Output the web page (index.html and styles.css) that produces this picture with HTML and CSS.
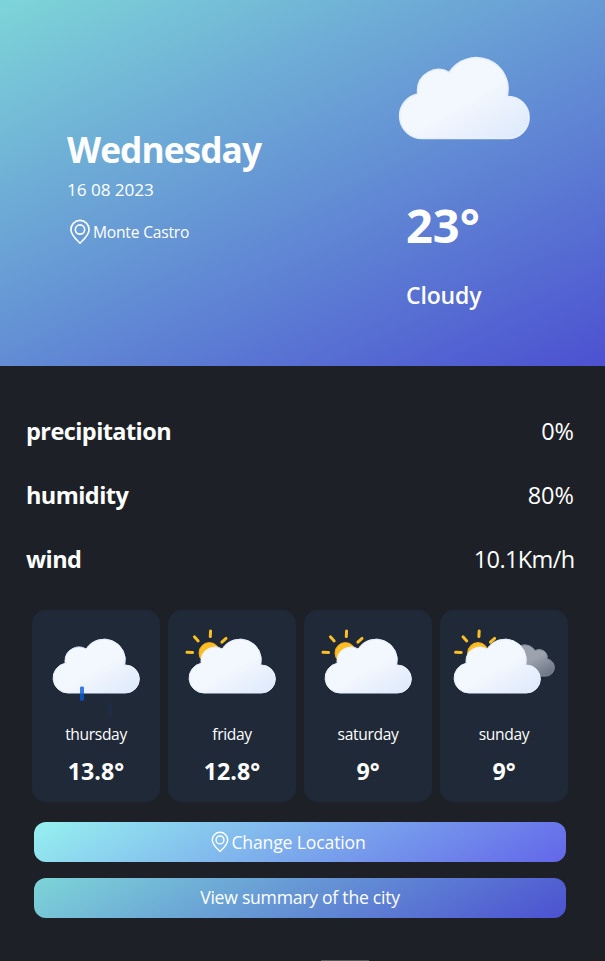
FILE: index.html
```html
<!DOCTYPE html>
<html lang="en">
<head>
<meta charset="utf-8">
<title>Weather</title>
<link rel="stylesheet" href="styles.css">
</head>
<body>
<svg class="defs" width="0" height="0" aria-hidden="true">
  <defs>
    <linearGradient id="white" gradientUnits="userSpaceOnUse" x1="22.56" y1="21.96" x2="39.2" y2="50.8">
      <stop offset="0" stop-color="#f3f7fe"/><stop offset=".45" stop-color="#f3f7fe"/><stop offset="1" stop-color="#deeafb"/>
    </linearGradient>
    <linearGradient id="gray" gradientUnits="userSpaceOnUse" x1="40.8" y1="23" x2="50.8" y2="40.5">
      <stop offset="0" stop-color="#9ca3af"/><stop offset=".45" stop-color="#9ca3af"/><stop offset="1" stop-color="#6b7280"/>
    </linearGradient>
    <symbol id="cloud" viewBox="0 0 64 64">
      <path d="M46.7 31.5h-.32a10.6 10.49 0 00-19.31-8 7 7 0 00-10.57 6 7.21 7.21 0 00.1 1.14A7.5 7.5 0 0018 45.5h28.7a7 7 0 000-14z" fill="url(#white)" stroke="#e6effc" stroke-width=".5"/>
    </symbol>
    <symbol id="sun" viewBox="0 0 64 64">
      <circle cx="20.7" cy="25.5" r="5.2" fill="#fbbf24" stroke="#f8af18" stroke-width=".5"/>
      <path d="M20.7 17.3v-2.8M12.3 25.7H9.5M14.76 19.76l-1.98-1.98M26.64 19.76l1.98-1.98" transform="rotate(3 20.7 25.7)" stroke="#fbbf24" stroke-width="1.5" stroke-linecap="round"/>
    </symbol>
    <symbol id="pin" viewBox="0 0 24 24">
      <path d="M12 22.3C9.2 19.4 3.6 15 3.6 9.7a8.4 8.4 0 0116.8 0c0 5.3-5.6 9.7-8.4 12.6z" fill="none" stroke="currentColor" stroke-width="1.5" stroke-linejoin="round"/>
      <circle cx="12" cy="9.7" r="4.3" fill="none" stroke="currentColor" stroke-width="1.5"/>
    </symbol>
  </defs>
</svg>
<main class="app">
  <header class="hero">
    <section class="place">
      <h1 class="day">Wednesday</h1>
      <p class="date">16 08 2023</p>
      <p class="city"><svg class="pin"><use href="#pin"/></svg><span class="city-name">Monte Castro</span></p>
    </section>
    <section class="now">
      <svg class="now-icon"><use href="#cloud"/></svg>
      <p class="now-temp">23°</p>
      <p class="now-text">Cloudy</p>
    </section>
  </header>
  <dl class="stats">
    <div class="stat"><dt>precipitation</dt><dd>0%</dd></div>
    <div class="stat"><dt>humidity</dt><dd>80%</dd></div>
    <div class="stat"><dt>wind</dt><dd class="speed">10.1Km/h</dd></div>
  </dl>
  <section class="week">
    <article class="card">
      <svg class="icon" viewBox="0 0 64 64"><use href="#cloud"/>
        <rect x="24" y="42.2" width="2" height="7.2" rx=".7" fill="#0a5ad4" opacity=".8"/>
        <rect x="38" y="50.5" width="2" height="7" rx=".7" fill="#0a5ad4" opacity=".08"/></svg>
      <p class="name">thursday</p><p class="temp">13.8°</p>
    </article>
    <article class="card">
      <svg class="icon" viewBox="0 0 64 64"><use href="#sun"/><use href="#cloud"/></svg>
      <p class="name">friday</p><p class="temp">12.8°</p>
    </article>
    <article class="card">
      <svg class="icon" viewBox="0 0 64 64"><use href="#sun"/><use href="#cloud"/></svg>
      <p class="name">saturday</p><p class="temp">9°</p>
    </article>
    <article class="card">
      <svg class="icon" viewBox="0 0 64 64"><g transform="translate(-1.7 0)"><use href="#sun"/>
        <path transform="translate(-.3 -.4)" d="M34.23 33.45a4.05 4.05 0 004.05 4h16.51a4.34 4.34 0 00.81-8.61 3.52 3.52 0 00.06-.66 4.06 4.06 0 00-6.13-3.48 6.08 6.08 0 00-11.25 3.19 6.34 6.34 0 00.18 1.46h-.18a4.05 4.05 0 00-4.05 4.1z" fill="url(#gray)" stroke="#848b98" stroke-width=".5"/></g>
        <g transform="translate(-3.5 0)"><use href="#cloud"/></g></svg>
      <p class="name">sunday</p><p class="temp">9°</p>
    </article>
  </section>
  <div class="actions">
    <button class="btn btn-light"><svg class="btn-pin"><use href="#pin"/></svg><span>Change Location</span></button>
    <button class="btn btn-summary"><span>View summary of the city</span></button>
  </div>
  <div class="track"><div class="thumb"></div></div>
</main>
</body>
</html>
```
FILE: styles.css
```css
* { box-sizing: border-box; margin: 0; padding: 0; }
body { background: #1d2027; color: #fff; font-family: "Open Sans", "Noto Sans", sans-serif; overflow: hidden; }
.defs { position: absolute; }
.app { width: 605px; height: 961px; display: flex; flex-direction: column; background: #1d2127; }
.hero { height: 366px; flex: none; display: flex; background: linear-gradient(154deg, #7dd5d8, #4c51d1); }
.place { width: 368px; padding: 129px 0 0 67px; }
.day { font-size: 35.3px; line-height: 40px; font-weight: 700; letter-spacing: -0.95px; }
.date { margin-top: 8px; font-size: 17.2px; line-height: 25px; letter-spacing: -0.08px; }
.city { margin-top: 17px; display: flex; align-items: center; height: 26px; }
.pin { width: 26px; height: 26px; }
.city-name { font-size: 15.6px; line-height: 24px; letter-spacing: -0.2px; margin-top: -1px; }
.now { width: 192px; padding-top: 2px; }
.now-icon { display: block; width: 192px; height: 192px; }
.now-temp { margin: -1px 0 0 38px; font-size: 47px; line-height: 64px; font-weight: 700; }
.now-text { margin: 22px 0 0 38px; font-size: 23px; line-height: 32px; font-weight: 600; letter-spacing: -0.15px; }
.stats { padding: 33px 31px 0 26px; font-size: 23.5px; }
.stat { height: 64px; display: flex; justify-content: space-between; align-items: center; line-height: 32px; }
.stat dt { font-weight: 700; letter-spacing: -0.57px; }
.speed { letter-spacing: -0.6px; margin-right: -0.6px; }
.week { display: flex; gap: 8px; padding: 19px 0 0 32px; }
.card { width: 128px; height: 192px; border-radius: 14px; background: #202938; text-align: center; }
.icon { display: block; width: 128px; height: 128px; margin-top: -8px; }
.name { font-size: 15.6px; line-height: 24px; margin-top: -8px; letter-spacing: -0.35px; }
.temp { font-size: 23.2px; line-height: 32px; font-weight: 700; margin-top: 9px; }
.actions { display: flex; flex-direction: column; gap: 16px; padding: 20px 39px 0 34px; }
.btn { height: 40px; border: 0; border-radius: 12px; display: flex; justify-content: center; align-items: center; color: #fff; font: 17.6px/28px "Open Sans", sans-serif; letter-spacing: -0.25px; background: linear-gradient(150deg, #7dd5d8, #4c51d1); }
.btn-light { padding-right: 25px; letter-spacing: -0.15px; background: linear-gradient(150deg, #96f1f0, #6366e9); }
.btn-summary { padding-bottom: 2px; }
.btn-pin { width: 22px; height: 22px; }
.track { margin-top: auto; height: 2px; background: #202024; padding: 1px 0 0 321px; }
.thumb { width: 48px; height: 1px; background: #57575b; }
```
